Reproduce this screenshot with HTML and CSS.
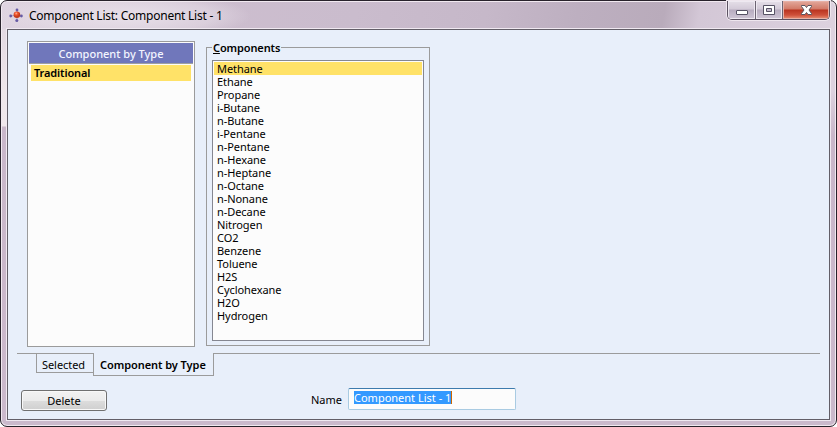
FILE: index.html
```html
<!DOCTYPE html>
<html lang="en">
<head>
<meta charset="utf-8">
<title>Component List: Component List - 1</title>
<link rel="stylesheet" href="styles.css">
</head>
<body>
<div class="window">
  <header class="titlebar">
    <svg class="app-icon" width="14" height="14" viewBox="0 0 14 14">
      <defs><radialGradient id="core" cx=".4" cy=".3"><stop offset="0" stop-color="#ffb596"/><stop offset=".45" stop-color="#f2552c"/><stop offset="1" stop-color="#c33a1c"/></radialGradient></defs>
      <path d="M8 2v5L2 8M8 7l4.500 1M8 7v5" stroke="#a59aba" fill="none"/>
      <circle cx="8" cy="2" r="1.400" fill="#665ba5"/>
      <circle cx="1.700" cy="8" r="1.400" fill="#665ba5"/>
      <circle cx="12.400" cy="8" r="1.400" fill="#665ba5"/>
      <circle cx="7.800" cy="12.400" r="1.500" fill="#665ba5"/>
      <circle cx="7.900" cy="6.800" r="3.300" fill="url(#core)"/>
    </svg>
    <h1 class="title">Component List: Component List - 1</h1>
    <div class="controls">
      <span class="control"><svg width="27" height="18" viewBox="0 0 27 18"><rect x="8.500" y="9.500" width="11" height="4" rx=".5" fill="#fff" stroke="#565264"/></svg></span>
      <span class="control"><svg width="26" height="18" viewBox="0 0 26 18"><path d="M7.500 4.500h11v9h-11z" fill="#fff" stroke="#565264"/><path d="M10.500 7.500h5v3h-5z" fill="#c5bdce" stroke="#565264"/></svg></span>
      <span class="control close"><svg width="46" height="18" viewBox="0 0 46 18"><path d="M18.500 4.500h3.500l1.500 2 1.500-2h3.500v1l-2.500 3.500 2.500 3.500v1H25l-1.500-2-1.500 2h-3.500v-1L21 9l-2.500-3.500z" fill="#fff" stroke="#59545f"/></svg></span>
    </div>
  </header>
  <main class="client">
    <div class="panels">
      <section class="types">
        <h2 class="types-head">Component by Type</h2>
        <div class="type-row">Traditional</div>
      </section>
      <fieldset class="group">
        <legend><u>C</u>omponents</legend>
        <ul class="list">
          <li class="current">Methane</li><li>Ethane</li><li>Propane</li><li>i-Butane</li><li>n-Butane</li><li>i-Pentane</li><li>n-Pentane</li><li>n-Hexane</li><li>n-Heptane</li><li>n-Octane</li><li>n-Nonane</li><li>n-Decane</li><li>Nitrogen</li><li>CO2</li><li>Benzene</li><li>Toluene</li><li>H2S</li><li>Cyclohexane</li><li>H2O</li><li>Hydrogen</li>
        </ul>
      </fieldset>
    </div>
    <nav class="tabs">
      <span class="lead"></span>
      <span class="tab">Selected</span>
      <span class="tab active">Component by Type</span>
      <span class="rest"></span>
    </nav>
    <footer class="actions">
      <button class="delete">Delete</button>
      <span class="name-label">Name</span>
      <div class="name-field"><span class="selection">Component List - 1</span></div>
    </footer>
  </main>
</div>
</body>
</html>
```
FILE: styles.css
```css
* { box-sizing: border-box; }
body { margin: 0; background: #fff; font: 11px/13px "Noto Sans", "Open Sans", sans-serif; letter-spacing: -.06px; color: #000; overflow: hidden; }
h1, h2, ul, fieldset, legend { margin: 0; padding: 0; font-size: inherit; }
.window {
  width: 837px; height: 427px; border: 1px solid #28222b; border-radius: 7px;
  box-shadow: inset 0 0 0 1px #f1e9f0; padding: 0 5px 6px 5px;
  background: radial-gradient(ellipse 125px 24px at 125px 15px, #e8e0e9 0, #e8e0e980 70%, #e8e0e900 100%) 0 0 / 100% 28px no-repeat,
    linear-gradient(100deg, #e0d5e1 0, #cdbecf 180px, #cabccd 350px, #c6b8c9 480px, #bdafc0 570px, #b9abbb 655px, #d3c7d6 690px, #ddd2df 837px) 0 0 / 100% 28px no-repeat,
    linear-gradient(#ded3df 0, #eee6ea 90px, #f0e8ec 125px, #c9b7ca 126px, #cbb9cc 100%) 0 0 / 50% 100% no-repeat,
    linear-gradient(#ddd2df 0, #ddd2df 90px, #c9b7ca 135px, #cbb9cc 100%);
}
.titlebar { height: 27px; display: flex; align-items: flex-start; padding-left: 3px; }
.app-icon { margin-top: 7px; flex: none; }
.title { margin: 6px 0 0 6px; font-size: 12px; line-height: 17px; font-weight: 400; white-space: nowrap; letter-spacing: -.24px; }
.controls { margin: 0 1px 0 auto; height: 19px; display: flex; border: 1px solid #5c5262; border-top: 0; border-radius: 0 0 5px 5px; overflow: hidden; box-shadow: 0 0 0 1px #eee6ee; }
.control { height: 18px; background: linear-gradient(#e5dfe8 0, #d3cad8 8px, #b7acbf 9px, #cfc6d6 100%); box-shadow: inset 0 0 0 1px #eee9f1; }
.control + .control { border-left: 1px solid #6c6372; }
.control svg { display: block; }
.control.close { background: linear-gradient(#e3a99d 0, #d27a68 8px, #b93420 9px, #cf503a 14px, #e89478 100%); box-shadow: inset 0 0 0 1px #e7b0a5; }
.client { height: 393px; border: 1px solid #f0e9f1; background: #e8effa; box-shadow: inset 0 0 0 1px #625e67; padding: 12px 10px 0 10px; }
.panels { display: flex; padding-left: 10px; height: 312px; }
.types { width: 168px; height: 306px; border: 1px solid #9b9b9b; background: #fcfcfc; padding: 1px; }
.types-head { height: 21px; background: #7077bb; color: #f3f5ff; text-align: center; line-height: 22px; border-bottom: 1px solid #a0a0a0; font-weight: 500; letter-spacing: 0; }
.type-row { margin: 1px 2px; height: 16px; background: #ffe268; padding-left: 3px; line-height: 16px; font-weight: 600; letter-spacing: -.12px; }
.group { margin-left: 11px; width: 224px; height: 305px; border: 1px solid #9b9b9b; padding: 0 5px; min-width: 0; }
legend { font-weight: 600; line-height: 13px; padding: 0 1px; letter-spacing: -.12px; }
.list { list-style: none; width: 212px; height: 281px; margin-top: 6px; background: #fcfcfc; border: 1px solid #858791; padding: 1px; }
.list li { height: 13px; padding-left: 3px; }
.list .current { background: #ffe268; }
.tabs { display: flex; height: 23px; }
.lead, .rest { border-top: 1px solid #9b9b9b; height: 1px; }
.lead { width: 19px; }
.rest { flex: 1; }
.tab { width: 57px; height: 20px; border: 1px solid #9b9b9b; border-right: 0; padding-left: 5px; line-height: 22px; white-space: nowrap; }
.tab.active { width: 121px; height: 23px; border-right: 1px solid #9b9b9b; border-top: 0; font-weight: 600; padding-left: 6px; line-height: 24px; }
.actions { display: flex; padding: 12px 0 0 4px; align-items: flex-start; }
.delete { width: 86px; height: 21px; margin: 2px 0 0; border: 1px solid #707070; border-radius: 3px; box-shadow: inset 0 0 0 1px #f8f8f8; background: linear-gradient(#f2f2f2 0, #ebebeb 50%, #dddddd 50%, #cfcfcf 100%); font: inherit; color: #000; padding: 0; }
.name-label { margin: 5px 0 0 204px; width: 37px; }
.name-field { width: 168px; height: 22px; border: 1px solid #a9cbe2; border-top-color: #3d7bad; border-radius: 2px; background: #fcfcfc; padding: 2px 5px; }
.selection { display: inline-block; height: 13px; letter-spacing: 0; background: #3399ff; color: #fff; border-right: 1px solid #cc6600; white-space: nowrap; }
```
